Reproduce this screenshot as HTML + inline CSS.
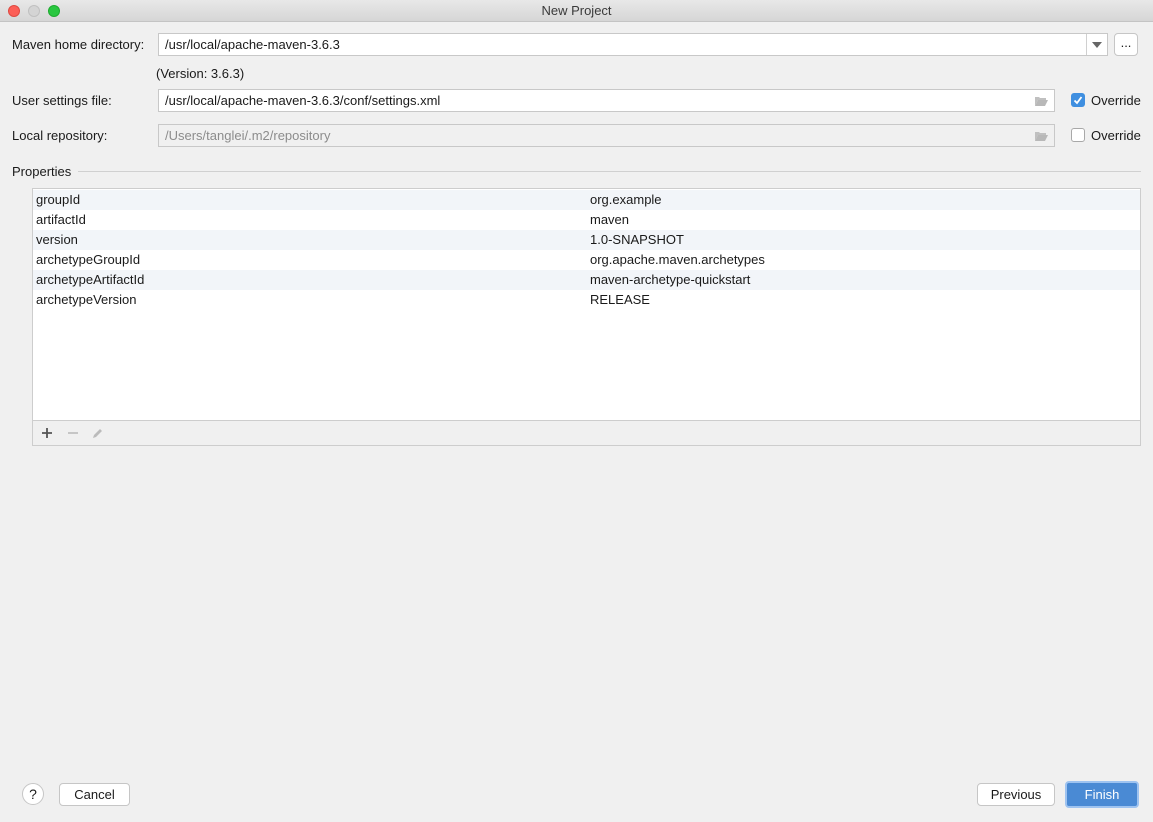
<!DOCTYPE html>
<html><head><meta charset="utf-8"><style>
*{box-sizing:border-box;margin:0;padding:0}
body{width:1153px;height:822px;background:#f0f0f0;font-family:"Liberation Sans",sans-serif;font-size:13px;color:#1a1a1a;position:relative;overflow:hidden}
.abs{position:absolute}
.title{left:0;top:0;width:1153px;height:22px;background:linear-gradient(#e8e8e8,#d6d6d6);border-bottom:1px solid #c4c4c4;text-align:center;line-height:22px;color:#3a3a3a}
.dot{top:5px;width:12px;height:12px;border-radius:50%}
.field{background:#fff;border:1px solid #c8c8c8;height:23px;line-height:21px;padding-left:6px}
.lbl{line-height:16px}
.row{position:absolute;left:0;width:1107px;height:20px;line-height:20px}
.row span{position:absolute}
.btn{background:#fff;border:1px solid #c6c6c6;border-radius:4px;height:23px;line-height:21px;text-align:center}
.cb{width:14px;height:14px;border-radius:3px}
</style></head><body>
<div class="abs title">New Project</div>
<div class="abs dot" style="left:8px;background:#fc5f57;border:1px solid #de4a42"></div>
<div class="abs dot" style="left:28px;background:#d4d4d4;border:1px solid #c0c0c0"></div>
<div class="abs dot" style="left:48px;background:#29c740;border:1px solid #1eab2f"></div>

<div class="abs lbl" style="left:12px;top:37px">Maven home directory:</div>
<div class="abs field" style="left:158px;top:33px;width:950px">/usr/local/apache-maven-3.6.3</div>
<div class="abs" style="left:1086px;top:34px;width:1px;height:21px;background:#d0d0d0"></div>
<div class="abs" style="left:1092px;top:42px;width:0;height:0;border-left:5px solid transparent;border-right:5px solid transparent;border-top:6px solid #666"></div>
<div class="abs btn" style="left:1114px;top:33px;width:24px;line-height:17px">...</div>
<div class="abs lbl" style="left:156px;top:66px">(Version: 3.6.3)</div>

<div class="abs lbl" style="left:12px;top:93px">User settings file:</div>
<div class="abs field" style="left:158px;top:89px;width:897px">/usr/local/apache-maven-3.6.3/conf/settings.xml</div>
<svg class="abs" style="left:1034px;top:95px" width="15" height="12"><path d="M1 2h4l1 1h6v2H4L1 11z" fill="#c0c0c0"/><path d="M4 5h10l-3 6H1z" fill="#b8b8b8"/></svg>
<div class="abs cb" style="left:1071px;top:93px;background:#3f8fe0"><svg width="14" height="14"><path d="M3.5 7.5l2.5 2.5 4.5-6" stroke="#fff" stroke-width="1.8" fill="none"/></svg></div>
<div class="abs lbl" style="left:1091px;top:93px">Override</div>

<div class="abs lbl" style="left:12px;top:128px">Local repository:</div>
<div class="abs field" style="left:158px;top:124px;width:897px;background:#f0f0f0;color:#8c8c8c">/Users/tanglei/.m2/repository</div>
<svg class="abs" style="left:1034px;top:130px" width="15" height="12"><path d="M1 2h4l1 1h6v2H4L1 11z" fill="#c0c0c0"/><path d="M4 5h10l-3 6H1z" fill="#b8b8b8"/></svg>
<div class="abs cb" style="left:1071px;top:128px;background:#fff;border:1px solid #a8a8a8"></div>
<div class="abs lbl" style="left:1091px;top:128px">Override</div>

<div class="abs lbl" style="left:12px;top:164px">Properties</div>
<div class="abs" style="left:78px;top:171px;width:1063px;height:1px;background:#d0d0d0"></div>

<div class="abs" style="left:32px;top:188px;width:1109px;height:258px;border:1px solid #cdcdcd;background:#fff">
<div class="row" style="top:1px;background:#f2f5f9"><span style="left:3px">groupId</span><span style="left:557px">org.example</span></div>
<div class="row" style="top:21px"><span style="left:3px">artifactId</span><span style="left:557px">maven</span></div>
<div class="row" style="top:41px;background:#f2f5f9"><span style="left:3px">version</span><span style="left:557px">1.0-SNAPSHOT</span></div>
<div class="row" style="top:61px"><span style="left:3px">archetypeGroupId</span><span style="left:557px">org.apache.maven.archetypes</span></div>
<div class="row" style="top:81px;background:#f2f5f9"><span style="left:3px">archetypeArtifactId</span><span style="left:557px">maven-archetype-quickstart</span></div>
<div class="row" style="top:101px"><span style="left:3px">archetypeVersion</span><span style="left:557px">RELEASE</span></div>
<div class="abs" style="left:0;top:231px;width:1107px;height:25px;background:#f0f0f0;border-top:1px solid #cdcdcd"></div>
<svg class="abs" style="left:7px;top:237px" width="80" height="14"><path d="M2 7h10M7 2v10" stroke="#555" stroke-width="1.8"/><path d="M28 7h10" stroke="#bbb" stroke-width="1.6"/><path d="M53 12l1-3 6-6 2 2-6 6z" fill="#bbb"/></svg>
</div>

<div class="abs" style="left:22px;top:783px;width:22px;height:22px;border-radius:50%;background:#fff;border:1px solid #c6c6c6;text-align:center;line-height:20px;font-size:14px">?</div>
<div class="abs btn" style="left:59px;top:783px;width:71px">Cancel</div>
<div class="abs btn" style="left:977px;top:783px;width:78px">Previous</div>
<div class="abs btn" style="left:1065px;top:781px;width:74px;height:27px;line-height:23px;background:#4a8ad4;border:2px solid #9ec3f0;color:#fff">Finish</div>
</body></html>
